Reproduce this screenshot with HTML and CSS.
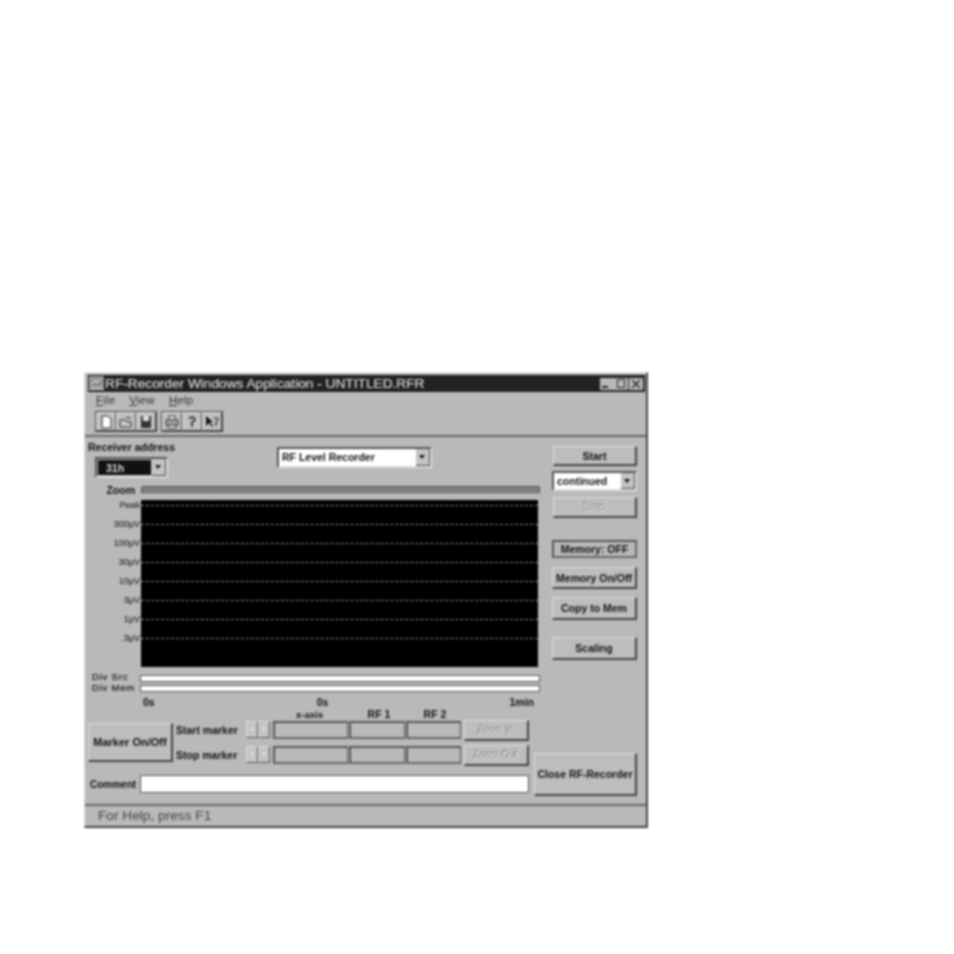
FILE: index.html
```html
<!DOCTYPE html>
<html lang="en">
<head>
<meta charset="utf-8">
<title>RF-Recorder</title>
<link rel="stylesheet" href="styles.css">
</head>
<body>
<div class="window">
  <div class="titlebar">
    <svg class="appicon" viewBox="0 0 15 15"><rect x="1" y="1" width="13" height="10" fill="#888" stroke="#ddd"/><path d="M3 8 L6 4 L8 7 L11 3" stroke="#fff" fill="none"/><rect x="0" y="12" width="15" height="2" fill="#ccc"/></svg>
    <span class="title">RF-Recorder Windows Application - UNTITLED.RFR</span>
    <span class="caps">
      <span class="cap"><svg viewBox="0 0 14 12"><rect x="2" y="8" width="6" height="2" fill="#222"/></svg></span>
      <span class="cap"><svg viewBox="0 0 14 12"><rect x="3.5" y="1.5" width="7" height="8" fill="none" stroke="#222"/></svg></span>
      <span class="cap close"><svg viewBox="0 0 14 12"><path d="M3 2 L11 10 M11 2 L3 10" stroke="#222" stroke-width="1.4"/></svg></span>
    </span>
  </div>
  <div class="menubar"><span><u>F</u>ile</span><span><u>V</u>iew</span><span><u>H</u>elp</span></div>
  <div class="toolbar">
    <div class="toolgroup">
      <span class="tool"><svg viewBox="0 0 14 14"><path d="M3 1 H9 L12 4 V13 H3 Z" fill="#fff" stroke="#222"/></svg></span>
      <span class="tool"><svg viewBox="0 0 14 14"><path d="M1 12 V5 H6 L8 7 H12 V12 Z" fill="#ccc" stroke="#222"/><path d="M7 3 Q10 1 12 4" fill="none" stroke="#222"/></svg></span>
      <span class="tool"><svg viewBox="0 0 14 14"><rect x="2" y="1" width="10" height="12" fill="#333"/><rect x="4" y="1" width="6" height="5" fill="#ddd"/></svg></span>
    </div>
    <div class="toolgroup">
      <span class="tool"><svg viewBox="0 0 14 14"><rect x="4" y="1" width="6" height="4" fill="#eee" stroke="#333"/><rect x="1" y="5" width="12" height="5" fill="#aaa" stroke="#333"/><rect x="3" y="10" width="8" height="3" fill="#eee" stroke="#333"/></svg></span>
      <span class="tool"><svg viewBox="0 0 14 14"><path d="M4 4 Q7 0 10 4 Q10 6 7 7 V12" fill="none" stroke="#222" stroke-width="1.5"/></svg></span>
      <span class="tool"><svg viewBox="0 0 14 14"><path d="M1 1 V11 L4 8 L7 12 L8 11 L5 7 H8 Z" fill="#111"/><path d="M9 4 Q11 1 13 4 Q13 6 11 7 V11" fill="none" stroke="#222" stroke-width="1.2"/></svg></span>
    </div>
  </div>
  <div class="body">
    <div class="upper">
      <div class="main">
        <div class="toprow">
          <div class="receiver">
            <div class="label">Receiver address</div>
            <div class="combo combo-addr"><span class="value selected">31h</span><span class="drop"></span></div>
          </div>
          <div class="combo combo-mode"><span class="value">RF Level Recorder</span><span class="drop"></span></div>
        </div>
        <div class="row zoomrow"><span class="rowlabel">Zoom</span><div class="zoombar"></div></div>
        <div class="chartrow">
          <div class="scale">
            <span>Peak</span><span>300&#956;V</span><span>100&#956;V</span><span>30&#956;V</span><span>10&#956;V</span><span>3&#956;V</span><span>1&#956;V</span><span>.3&#956;V</span>
          </div>
          <div class="chart">
            <i></i><i></i><i></i><i></i><i></i><i></i><i></i><i></i>
          </div>
        </div>
        <div class="row divrow first"><span class="rowlabel light src">Div Src</span><div class="divbar"></div></div>
        <div class="row divrow"><span class="rowlabel light">Div Mem</span><div class="divbar"></div></div>
        <div class="axis"><span>0s</span><span class="axis-mid">0s</span><span>1min</span></div>
      </div>
      <div class="side">
        <div class="btn b-start">Start</div>
        <div class="combo combo-run"><span class="value">continued</span><span class="drop"></span></div>
        <div class="btn disabled b-stop">Stop</div>
        <div class="status-box">Memory: OFF</div>
        <div class="btn b-mem">Memory On/Off</div>
        <div class="btn b-copy">Copy to Mem</div>
        <div class="btn b-scale">Scaling</div>
      </div>
    </div>
    <div class="lower">
      <div class="lowermain">
        <div class="markers">
          <div class="btn b-marker">Marker On/Off</div>
          <div class="markergrid">
            <span class="head c-x">x-axis</span><span class="head c-1">RF 1</span><span class="head c-2">RF 2</span>
            <span class="mlabel">Start marker</span>
            <span class="spin"><b>&#8249;</b><b>&#8250;</b></span>
            <span class="field"></span><span class="field"></span><span class="field"></span>
            <span class="btn disabled zb">Zoom In</span>
            <span class="mlabel">Stop marker</span>
            <span class="spin"><b>&#8249;</b><b>&#8250;</b></span>
            <span class="field"></span><span class="field"></span><span class="field"></span>
            <span class="btn disabled zb">Zoom Out</span>
          </div>
        </div>
        <div class="commentrow"><span class="clabel">Comment</span><div class="comment"></div></div>
      </div>
      <div class="btn b-close">Close RF-Recorder</div>
    </div>
  </div>
  <div class="statusbar">For Help, press F1</div>
</div>
</body>
</html>
```
FILE: styles.css
```css
html, body { margin: 0; padding: 0; background: #fff; }
body { width: 954px; height: 954px; position: relative; overflow: hidden; font-family: "Liberation Sans", Arial, sans-serif; }
.window {
  position: absolute; left: 84px; top: 372px; width: 564px; height: 456px; box-sizing: border-box;
  background: #b9b9b9; border-right: 2px solid #444; border-bottom: 2px solid #444; border-left: 1px solid #ddd; border-top: 1px solid #eee;
  display: flex; flex-direction: column; filter: blur(0.9px); color: #111;
  font-size: 10.5px; font-weight: bold;
}
.titlebar { height: 17px; margin: 2px 1px 0 3px; background: #222; color: #ddd; display: flex; align-items: center; font-size: 13.7px; font-weight: normal; flex: none; }
.appicon { width: 15px; height: 15px; margin: 0 1px 0 1px; flex: none; }
.title { white-space: nowrap; -webkit-text-stroke: 0.2px #ddd; }
.caps { margin-left: auto; display: flex; margin-right: 2px; }
.cap { width: 14px; height: 12px; background: #b9b9b9; display: block; }
.cap svg { width: 14px; height: 12px; display: block; }
.close { margin-left: 1px; }
.menubar { height: 16px; display: flex; gap: 14px; padding: 0 0 0 11px; font-size: 11.5px; font-weight: normal; align-items: center; box-sizing: border-box; flex: none; color: #333; letter-spacing: 0.2px; }
.toolbar { height: 29px; padding: 3px 0 0 10px; box-sizing: border-box; display: flex; gap: 4px; border-bottom: 2px solid #666; flex: none; }
.toolgroup { display: flex; height: 21px; border: 1px solid #444; box-sizing: border-box; }
.tool { width: 20px; height: 19px; box-sizing: border-box; border: 1px solid #444; border-top-color: #ddd; border-left-color: #ddd; background: #c2c2c2; display: flex; align-items: center; justify-content: center; }
.tool svg { width: 14px; height: 14px; }
.body { flex: 1; display: flex; flex-direction: column; padding: 0; min-height: 0; }
.upper { display: flex; height: 272px; flex: none; }
.main { width: 456px; flex: none; padding-left: 3px; box-sizing: border-box; }
.toprow { height: 46px; display: flex; position: relative; }
.receiver { padding-top: 5px; width: 189px; flex: none; }
.label { height: 15px; line-height: 11px; white-space: nowrap; }
.combo { display: flex; box-sizing: border-box; border: 2px solid #555; border-right-color: #ddd; border-bottom-color: #ddd; background: #fff; align-items: stretch; }
.combo-addr { width: 73px; height: 21px; margin-left: 7px; background: #b9b9b9; }
.combo-mode { width: 155px; height: 21px; margin-top: 10px; }
.combo-run { width: 85px; height: 20px; margin-top: 5px; }
.value { flex: 1; padding-left: 3px; line-height: 16px; white-space: nowrap; overflow: hidden; }
.selected { background: #111; color: #ddd; margin: 1px; padding-left: 8px; }
.drop { width: 14px; flex: none; background: #c4c4c4; border-right: 1px solid #444; border-bottom: 1px solid #444; box-sizing: border-box; position: relative; }
.drop::after { content: ""; position: absolute; left: 3px; top: 6px; border: 3px solid transparent; border-top: 4px solid #111; border-bottom: 0; }
.row { display: flex; align-items: center; }
.rowlabel { width: 47px; text-align: right; flex: none; white-space: nowrap; }
.rowlabel.light { width: 52px; height: 10px; text-align: left; padding-left: 4px; box-sizing: border-box; font-weight: normal; font-size: 9.5px; line-height: 10px; letter-spacing: 0.8px; -webkit-text-stroke: 0.2px #222; }
.rowlabel.src { margin-top: -3px; }
.zoomrow { height: 12px; margin-top: 1px; }
.zoombar { width: 399px; height: 8px; margin-left: 6px; background: #7e7e7e; border: 1px solid #555; border-radius: 2px; box-sizing: border-box; border-bottom-color: #999; }
.chartrow { display: flex; margin-top: 4px; }
.scale { width: 53px; flex: none; height: 167px; display: flex; flex-direction: column; align-items: flex-end; padding-right: 1px; box-sizing: border-box; font-size: 9px; font-weight: normal; color: #333; }
.scale span { height: 19px; line-height: 11px; -webkit-text-stroke: 0.2px #333; }
.chart { width: 397px; height: 167px; background: #000; flex: none; box-sizing: border-box; padding-top: 5px; }
.chart i { display: block; height: 19px; box-sizing: border-box; border-top: 1px dashed #8a8a8a; }
.divrow { height: 10px; }
.divrow.first { margin-top: 6px; }
.divbar { width: 400px; height: 7px; background: #fff; border: 1px solid #555; box-sizing: border-box; }
.axis { display: flex; justify-content: space-between; margin-top: 3px; padding: 0 7px 0 55px; height: 13px; line-height: 13px; }
.axis-mid { margin-right: 19px; }
.side { display: flex; flex-direction: column; width: 85px; margin-left: 11px; }
.btn { box-sizing: border-box; background: #bdbdbd; border: 1px solid #ddd; border-right: 2px solid #444; border-bottom: 2px solid #444; display: flex; align-items: center; justify-content: center; white-space: nowrap; }
.disabled { color: #e6e6e6; text-shadow: -1px -1px 0 #707070; font-weight: normal; font-size: 11px; }
.b-start { height: 20px; margin-top: 9px; margin-left: 1px; width: 84px; }
.b-stop { height: 21px; margin-top: 6px; margin-left: 1px; width: 84px; }
.status-box { height: 18px; margin-top: 22px; box-sizing: border-box; border: 2px solid #555; border-right-color: #666; border-bottom-color: #666; display: flex; align-items: center; justify-content: center; }
.b-mem { height: 22px; margin-top: 9px; }
.b-copy { height: 23px; margin-top: 8px; }
.b-scale { height: 23px; margin-top: 17px; }
.lower { display: flex; flex: 1; }
.lowermain { width: 444px; flex: none; padding-left: 3px; box-sizing: border-box; }
.markers { display: flex; align-items: flex-start; }
.b-marker { width: 85px; height: 39px; margin-top: 14px; flex: none; font-size: 11px; }
.markergrid { display: grid; grid-template-columns: 70px 27px 76px 57px 56px 67px; grid-template-rows: 11px 20px 5px 20px; margin-left: 3px; padding-top: 0; }
.head { text-align: center; line-height: 11px; }
.c-x { grid-column: 3; grid-row: 1; font-size: 9.5px; margin-right: 3px; }
.c-1 { grid-column: 4; grid-row: 1; margin-left: 3px; }
.c-2 { grid-column: 5; grid-row: 1; margin-left: 2px; }
.mlabel { grid-column: 1; line-height: 20px; white-space: nowrap; }
.spin { grid-column: 2; display: flex; height: 17px; margin-top: 1px; }
.spin b { width: 12px; height: 17px; box-sizing: border-box; background: #c4c4c4; border: 1px solid #ddd; border-right-color: #555; border-bottom-color: #555; text-align: center; font-size: 10px; line-height: 14px; color: #fff; font-weight: normal; }
.field { height: 18px; box-sizing: border-box; border: 2px solid #555; border-bottom-color: #666; border-right-width: 1px; margin-right: 1px; margin-top: 1px; }
.zb { margin-left: 2px; width: 65px; height: 21px; font-size: 10px; }
.markergrid > :nth-child(4), .markergrid > :nth-child(5), .markergrid > :nth-child(6), .markergrid > :nth-child(7), .markergrid > :nth-child(8), .markergrid > :nth-child(9) { grid-row: 2; }
.markergrid > :nth-child(10), .markergrid > :nth-child(11), .markergrid > :nth-child(12), .markergrid > :nth-child(13), .markergrid > :nth-child(14), .markergrid > :nth-child(15) { grid-row: 4; }
.commentrow { display: flex; align-items: center; margin-top: 10px; }
.clabel { width: 52px; flex: none; padding-left: 2px; box-sizing: border-box; font-size: 10px; }
.comment { width: 389px; height: 18px; background: #fff; border: 1px solid #555; box-sizing: border-box; }
.b-close { width: 103px; height: 43px; margin-top: 44px; margin-left: 5px; flex: none; }
.statusbar { height: 22px; flex: none; border-top: 2px solid #666; padding-left: 13px; font-size: 13.7px; font-weight: normal; line-height: 20px; box-sizing: border-box; color: #444; }
```
